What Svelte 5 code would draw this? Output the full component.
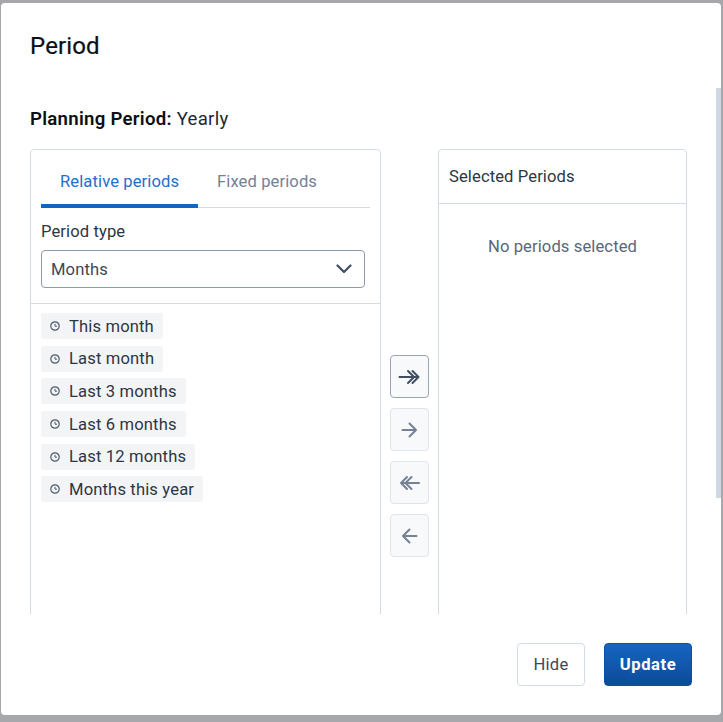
<script>
  const periods = ['This month', 'Last month', 'Last 3 months', 'Last 6 months', 'Last 12 months', 'Months this year'];
  const arrows = [
    { d: 'M1.5 12H20.5M14.5 6L20.5 12L14.5 18M10 6L16 12L10 18', on: true },
    { d: 'M4.5 12H18M11.5 5.5L18 12L11.5 18.5', on: false },
    { d: 'M3 12H21M9 6L3 12L9 18M13.5 6L7.5 12L13.5 18', on: false },
    { d: 'M5 12H18.5M11.5 5.5L5 12L11.5 18.5', on: false }
  ];
</script>

<div class="overlay">
  <div class="modal">
    <span class="thumb"></span>
    <h1>Period</h1>
    <p class="planning"><b>Planning Period:</b> Yearly</p>
    <div class="body">
      <section class="left">
        <div class="tabs">
          <span class="tab active">Relative periods</span>
          <span class="tab">Fixed periods</span>
        </div>
        <div class="field">
          <span class="label">Period type</span>
          <div class="select">
            <span>Months</span>
            <svg width="16" height="10" viewBox="0 0 16 10"><path d="M1.5 1.5L8 8L14.5 1.5" fill="none" stroke="#414e63" stroke-width="2.2" stroke-linecap="round" stroke-linejoin="round" /></svg>
          </div>
        </div>
        <div class="list">
          {#each periods as p}
            <div class="chip">
              <svg width="10" height="10" viewBox="0 0 10 10"><circle cx="5" cy="5" r="4.2" fill="none" stroke="#4f5b6e" stroke-width="1.2" /><path d="M5 2.8V5.2H7" fill="none" stroke="#4f5b6e" stroke-width="1" /></svg>
              <span>{p}</span>
            </div>
          {/each}
        </div>
      </section>
      <div class="actions">
        {#each arrows as a}
          <button class:on={a.on}>
            <svg width="24" height="24" viewBox="0 0 24 24"><path d={a.d} fill="none" stroke-width="2" stroke-linecap="round" stroke-linejoin="round" /></svg>
          </button>
        {/each}
      </div>
      <section class="right">
        <div class="head">Selected Periods</div>
        <div class="empty">No periods selected</div>
      </section>
    </div>
    <footer>
      <button class="hide">Hide</button>
      <button class="update">Update</button>
    </footer>
  </div>
</div>

<style>
  :global(body) { margin: 0; background: #a6a8ab; }
  .overlay {
    width: 723px; height: 722px; box-sizing: border-box;
    padding: 3px 2px 7px 1px;
    font-family: Roboto, sans-serif; overflow: hidden;
  }
  .modal {
    position: relative; height: 100%; box-sizing: border-box;
    display: flex; flex-direction: column;
    background: #fff; border-radius: 4px; padding: 0 29px;
  }
  .thumb { position: absolute; right: 0; top: 85px; width: 5px; height: 410px; background: #d0d9e3; }
  h1 { margin: 28px 0 0; font-size: 24px; line-height: 30px; font-weight: 400; color: #0c0f14; -webkit-text-stroke: 0.2px #0c0f14; letter-spacing: 0.15px; }
  .planning { margin: 45px 0 0; font-size: 18.6px; line-height: 26px; color: #1f2733; letter-spacing: 0.28px; }
  .planning b { font-weight: 600; color: #0c0f14; }
  .body { flex: 1; min-height: 0; overflow: hidden; display: flex; margin-top: 17px; }
  section { border: 1px solid #d3dce6; border-radius: 4px 4px 0 0; box-sizing: border-box; height: 600px; flex: none; }
  .left { width: 351px; }
  .tabs { display: flex; margin: 0 10px; border-bottom: 1px solid #d3dce6; box-sizing: border-box; height: 58px; }
  .tab { padding: 0 19px; line-height: 64px; height: 58px; box-sizing: border-box; font-size: 16.6px; color: #758195; letter-spacing: 0.1px; }
  .tab.active { color: #1f6fc8; border-bottom: 4px solid #1565c0; width: 157px; white-space: nowrap; }
  .field { padding: 14px 15px 15px 10px; border-bottom: 1px solid #d3dce6; }
  .label { display: block; font-size: 16.6px; line-height: 20px; color: #2c3644; letter-spacing: 0.1px; }
  .select {
    display: flex; justify-content: space-between; align-items: center;
    margin-top: 8px; height: 38px; box-sizing: border-box; padding: 0 12px 0 9px;
    border: 1px solid #8c9bb0; border-radius: 4px; font-size: 16.6px; color: #3d4859; letter-spacing: 0.1px;
  }
  .list { padding: 9px 10px; display: flex; flex-direction: column; align-items: flex-start; gap: 6.7px; }
  .chip {
    display: flex; align-items: center; gap: 9px; height: 26px; padding: 0 9px;
    background: #f3f4f6; border-radius: 3px; font-size: 16.6px; color: #2c3644; letter-spacing: 0.14px;
  }
  .actions { width: 57px; flex: none; display: flex; flex-direction: column; align-items: center; gap: 10px; padding-top: 206px; }
  .actions button {
    width: 39px; height: 43px; padding: 0; display: flex; align-items: center; justify-content: center;
    background: #f8f9fb; border: 1px solid #dfe5ec; border-radius: 4px;
  }
  .actions button svg { stroke: #758195; }
  .actions button.on { border-color: #98a5b6; }
  .actions button.on svg { stroke: #414e63; }
  .right { width: 249px; }
  .head { height: 54px; line-height: 54px; padding-left: 10px; font-size: 16.6px; color: #2c3644; letter-spacing: 0.1px; border-bottom: 1px solid #d3dce6; box-sizing: border-box; }
  .empty { padding-top: 33px; line-height: 20px; text-align: center; font-size: 16.6px; color: #5a6679; letter-spacing: 0.1px; }
  footer { height: 101px; flex: none; display: flex; justify-content: flex-end; gap: 19px; padding-top: 29px; box-sizing: border-box; }
  footer button { height: 43px; border-radius: 4px; font: 16.6px Roboto, sans-serif; }
  .hide { width: 68px; background: #fff; border: 1px solid #d3dce6; color: #3d4859; letter-spacing: 0.3px; }
  .update { width: 88px; border: 1px solid #0e4fa0; background: linear-gradient(#1565c0, #0d4a9a); color: #fff; font-weight: 700; letter-spacing: 0.6px; }
</style>
